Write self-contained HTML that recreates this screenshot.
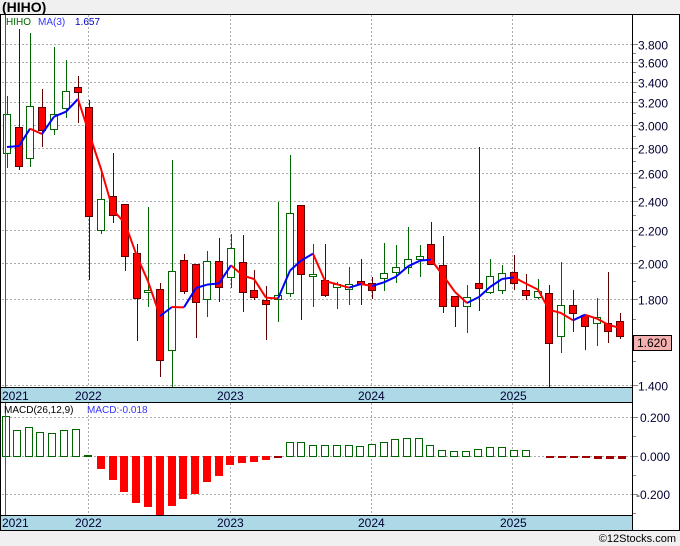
<!DOCTYPE html>
<html><head><meta charset="utf-8"><style>
html,body{margin:0;padding:0;background:#f0f0f0;width:680px;height:546px;overflow:hidden}
svg{display:block}
text{font-family:"Liberation Sans","DejaVu Sans",sans-serif}
</style></head><body>
<svg id="c" width="680" height="546" xmlns="http://www.w3.org/2000/svg">
<rect x="0" y="0" width="680" height="546" fill="#f0f0f0"/>
<rect x="0" y="14" width="680" height="517" fill="#fff"/>
<text x="2" y="12" font-size="14" font-weight="bold" fill="#000">(HIHO)</text>
<g id="g"></g>
<text x="676" y="542" font-size="11" fill="#000" text-anchor="end">©12Stocks.com</text>
</svg>
<script>
var s='';
function py(p){return 499.8-341.6*Math.log(p);}
var labs=[3.8,3.6,3.4,3.2,3.0,2.8,2.6,2.4,2.2,2.0,1.8,1.4];
labs.forEach(function(p){var y=Math.round(py(p))+0.5;
 s+='<line x1="2" x2="632" y1="'+y+'" y2="'+y+'" stroke="#aaa" stroke-dasharray="2,2"/>';
 s+='<line x1="632" x2="638" y1="'+y+'" y2="'+y+'" stroke="#888"/>';
 s+='<text x="638" y="'+(y+5)+'" font-size="12" fill="#000033">'+p.toFixed(3)+'</text>';});
[3.7,3.5,3.3,3.1,2.9,2.7,2.5,2.3,2.1,1.9,1.7,1.6,1.5].forEach(function(p){var y=Math.round(py(p))+0.5;
 s+='<line x1="632" x2="636" y1="'+y+'" y2="'+y+'" stroke="#888"/>';});
[88,230,371,512].forEach(function(x){
 s+='<line x1="'+(x+0.5)+'" x2="'+(x+0.5)+'" y1="15" y2="387" stroke="#aaa" stroke-dasharray="2,2"/>';
 s+='<line x1="'+(x+0.5)+'" x2="'+(x+0.5)+'" y1="403" y2="515" stroke="#aaa" stroke-dasharray="2,2"/>';});
[417,456,494].forEach(function(y,i){s+='<line x1="2" x2="632" y1="'+(y+0.5)+'" y2="'+(y+0.5)+'" stroke="#aaa" stroke-dasharray="2,2"/>';
 s+='<line x1="632" x2="638" y1="'+(y+0.5)+'" y2="'+(y+0.5)+'" stroke="#888"/>';
 s+='<text x="'+(i==2?636:640)+'" y="'+(y+5)+'" font-size="12" fill="#000033">'+['0.200','0.000','-0.200'][i]+'</text>';});
[436,475,513].forEach(function(y){s+='<line x1="632" x2="636" y1="'+(y+0.5)+'" y2="'+(y+0.5)+'" stroke="#888"/>';});
var C=[[7,96,168,114,153,1],[19,29,170,127,166,0],[30,33,167,106,158,1],[42,89,147,107,130,0],[54,47,135,114,129,1],[66,60,118,91,108,1],[78,76,123,87,92,0],
[89,100,280,107,216,0],[101,168,234,199,230,1],[113,153,223,196,215,0],[125,204,271,204,256,0],[137,244,341,253,298,0],[148,207,307,290,292,1],[160,283,377,289,360,0],
[172,160,387,271,350,1],[184,254,294,260,291,0],[196,264,338,264,302,0],[207,251,317,261,299,1],[219,238,302,261,287,0],[231,234,288,248,277,1],[243,235,312,262,292,0],
[254,270,300,290,297,0],[266,286,340,300,304,0],[278,202,322,295,299,1],[290,155,297,213,293,1],[301,205,320,205,274,0],[313,244,307,274,276,1],[325,244,297,280,295,0],
[337,282,309,284,287,1],[349,267,305,284,289,1],[361,259,305,281,284,0],[372,277,299,283,290,0],[384,243,291,273,278,1],[396,245,283,267,272,1],[408,227,274,259,267,1],
[420,245,277,256,259,1],[431,222,265,244,264,0],[443,236,313,265,306,0],[455,296,327,296,306,0],[467,285,333,297,306,1],[479,147,311,283,288,0],[490,259,294,276,292,1],
[502,265,294,273,290,1],[514,255,290,272,283,0],[526,274,300,290,295,0],[538,279,299,291,297,1],[549,285,387,293,343,0],[561,262,353,305,336,1],[573,290,332,305,313,0],
[585,315,350,315,326,0],[597,298,346,317,323,1],[608,272,343,323,331,0],[620,313,339,321,336,0]];
C.forEach(function(c){var g=c[5],col=g?'#006400':'#600000';
 s+='<line x1="'+(c[0]+0.5)+'" x2="'+(c[0]+0.5)+'" y1="'+c[1]+'" y2="'+c[2]+'" stroke="'+col+'" stroke-width="1"/>';
 s+='<rect x="'+(c[0]-3.5)+'" y="'+(c[3]+0.5)+'" width="7" height="'+Math.max(1,c[4]-c[3])+'" fill="'+(g?'#fff':'#f00')+'" stroke="'+col+'"/>';});
var cl=C.map(function(c){return c[5]?c[3]:c[4];});
var m=[];for(var i=0;i<C.length;i++){var a=cl.slice(Math.max(0,i-2),i+1);m.push(a.reduce(function(x,y){return x+y;},0)/a.length);}
m[0]=147;m[1]=146;
for(var i=1;i<C.length;i++){var up=m[i]<=m[i-1];
 s+='<line x1="'+C[i-1][0]+'" y1="'+m[i-1]+'" x2="'+C[i][0]+'" y2="'+m[i]+'" stroke="'+(up?'#0000ff':'#ff0000')+'" stroke-width="2"/>';}
var M=[[6,416],[17,430],[29,427],[40,432],[52,433],[64,430],[76,429],[88,455],[101,469],[113,480],[124,492],[136,503],[148,507],[160,515],[172,506],[183,499],[195,494],[207,482],[219,476],[230,465],[242,463],[254,462],[266,460],[278,458],
[290,442],[301,442],[313,445],[325,445],[337,445],[349,445],[360,446],[372,444],[384,442],[395,439],[407,438],[419,438],[430,445],[442,450],[454,451],[466,451],[478,449],[490,447],[502,447],[514,450],[526,450],
[550,457],[562,457],[574,458],[586,458],[598,459],[610,459],[622,459]];
M.forEach(function(b,i){var x=b[0]-3.5,y=b[1];
 if(y<456){s+='<rect x="'+x+'" y="'+(y+0.5)+'" width="7" height="'+(456-y)+'" fill="#fff" stroke="#006400"/>';}
 else{var col=(i>=23)?'#a00000':'#f00';s+='<rect x="'+(x-0.5)+'" y="456" width="8" height="'+Math.max(2,y-456)+'" fill="'+col+'"/>';}});
s+='<rect x="1" y="387" width="631" height="16" fill="#add8e6"/><line x1="1" x2="632" y1="387.5" y2="387.5" stroke="#000"/><line x1="1" x2="632" y1="402.5" y2="402.5" stroke="#000"/>';
s+='<rect x="1" y="515" width="631" height="15" fill="#add8e6"/><line x1="1" x2="632" y1="515.5" y2="515.5" stroke="#000"/><line x1="0" x2="680" y1="530.5" y2="530.5" stroke="#000"/>';
[[2,'2021'],[75,'2022'],[217,'2023'],[358,'2024'],[500,'2025']].forEach(function(t){
 s+='<text x="'+t[0]+'" y="400" font-size="12" fill="#000033">'+t[1]+'</text>';
 s+='<text x="'+t[0]+'" y="527" font-size="12" fill="#000033">'+t[1]+'</text>';});
s+='<line x1="0" x2="680" y1="14.5" y2="14.5" stroke="#000"/>';
s+='<line x1="632.5" x2="632.5" y1="14" y2="531" stroke="#000"/>';
s+='<line x1="679.5" x2="679.5" y1="14" y2="531" stroke="#000"/>';
s+='<line x1="0.5" x2="0.5" y1="14" y2="531" stroke="#000"/>';
s+='<line x1="5.5" x2="5.5" y1="15" y2="387" stroke="#555"/>';
s+='<line x1="5.5" x2="5.5" y1="403" y2="515" stroke="#555"/>';
s+='<rect x="633.5" y="335.5" width="38" height="15" fill="#f4b0b0" stroke="#000"/><text x="637" y="347" font-size="12" fill="#000">1.620</text>';
s+='<text x="6" y="25" font-size="10" fill="#006400">HIHO</text><text x="38" y="25" font-size="10" fill="#3333ff">MA(3)</text><text x="75" y="25" font-size="10" fill="#0000cc">1.657</text>';
s+='<text x="4" y="413" font-size="10" fill="#000">MACD(26,12,9)</text><text x="87" y="413" font-size="10" fill="#3333ff">MACD:-0.018</text>';
document.getElementById('g').innerHTML=s;
</script>
</body></html>
